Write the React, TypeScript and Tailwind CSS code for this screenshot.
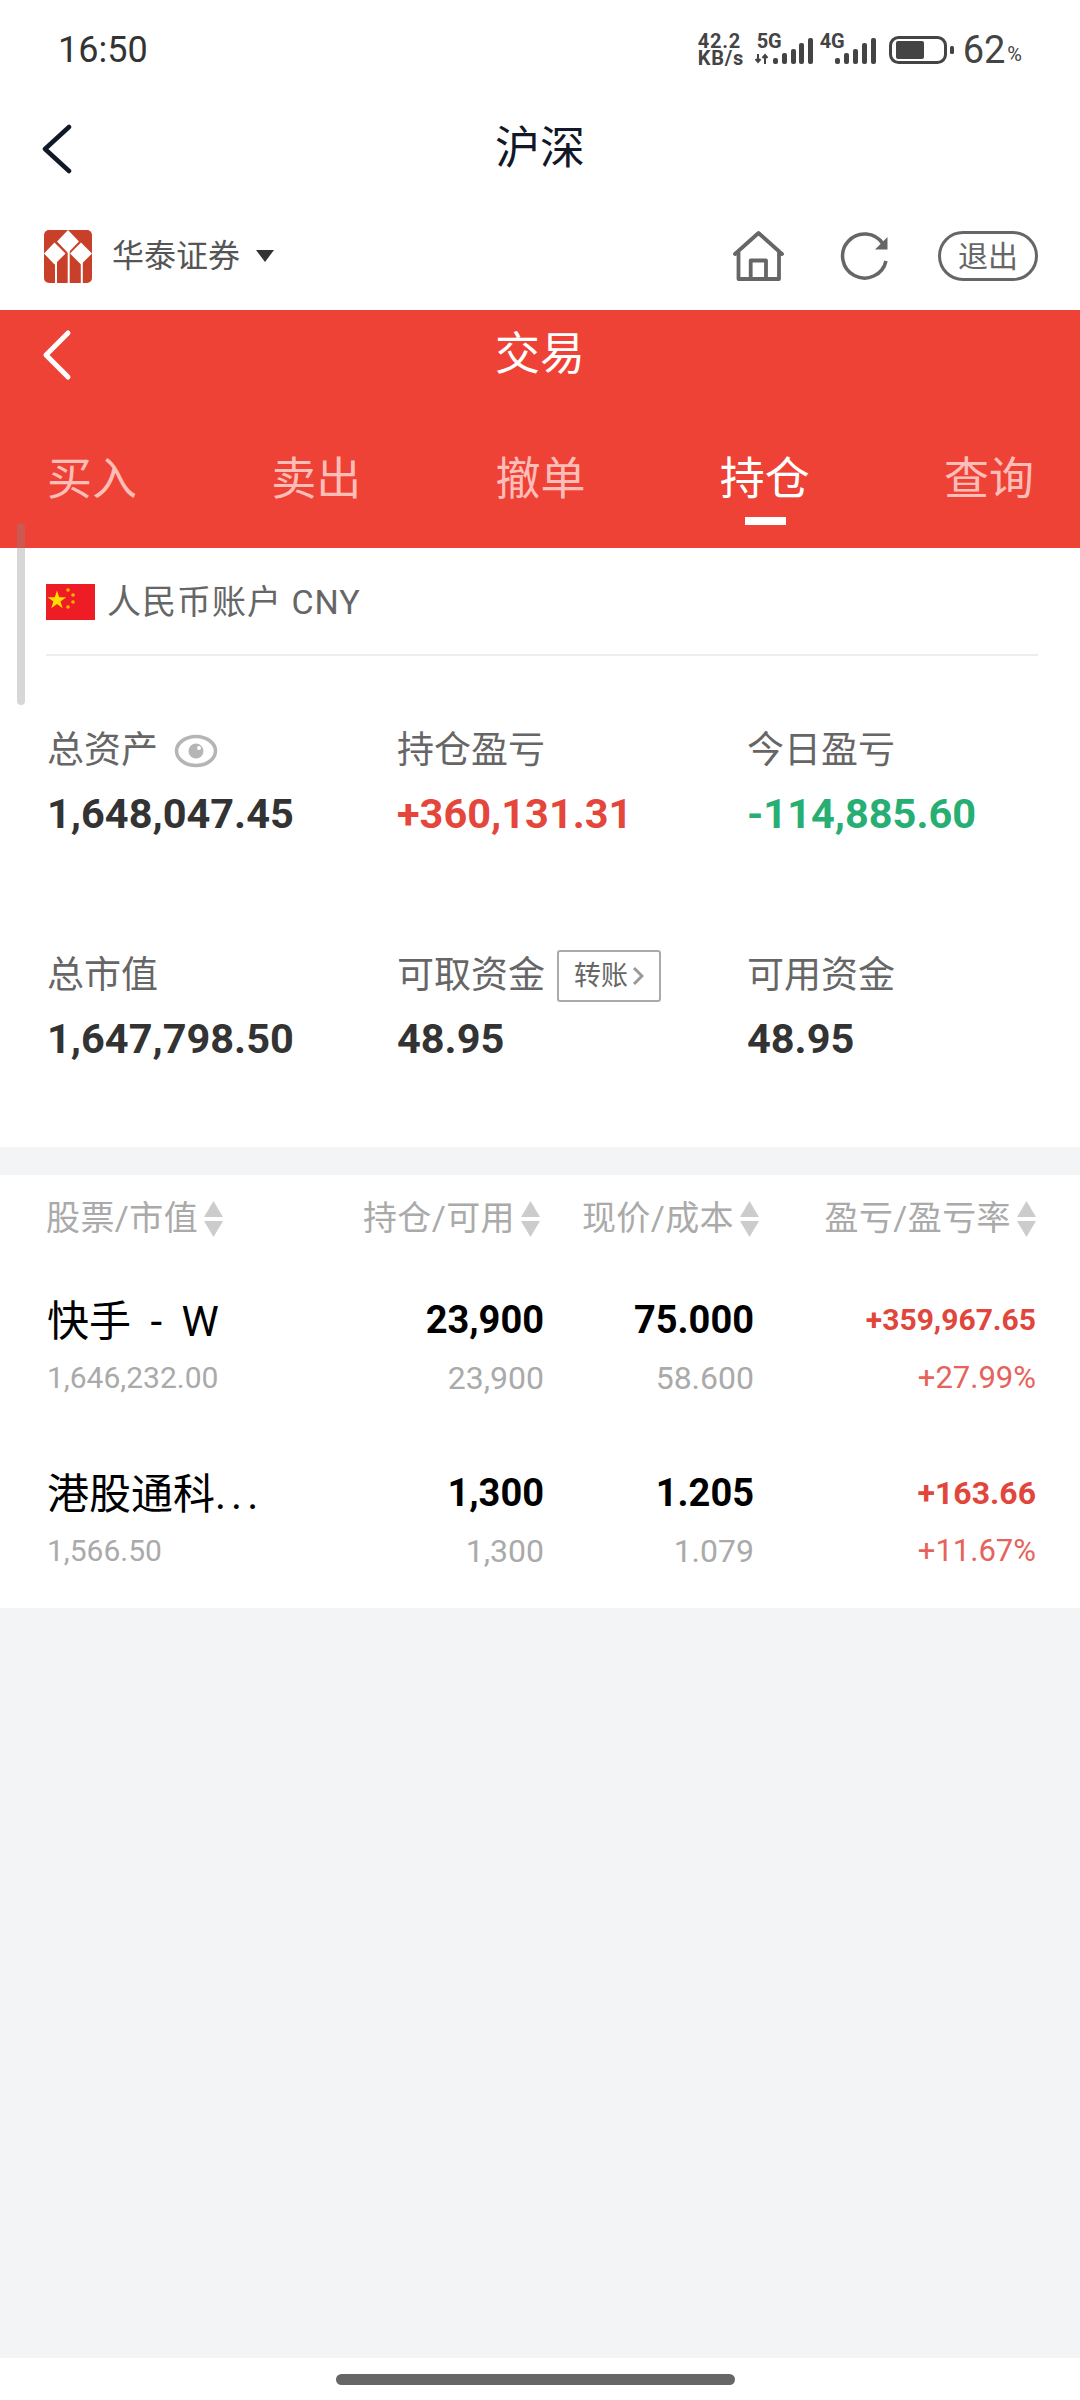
const stats = [
  { label: "总资产", value: "1,648,047.45", color: "text-[#333333]", eye: true },
  { label: "持仓盈亏", value: "+360,131.31", color: "text-[#e5463b]" },
  { label: "今日盈亏", value: "-114,885.60", color: "text-[#27ae73]" },
  { label: "总市值", value: "1,647,798.50", color: "text-[#333333]" },
  { label: "可取资金", value: "48.95", color: "text-[#333333]", transfer: true },
  { label: "可用资金", value: "48.95", color: "text-[#333333]" },
];

const rows = [
  {
    name: "快手 - W",
    dots: false,
    cap: "1,646,232.00",
    hold: "23,900",
    avail: "23,900",
    price: "75.000",
    cost: "58.600",
    pnl: "+359,967.65",
    pnlSize: "text-[30px]",
    rate: "+27.99%",
  },
  {
    name: "港股通科",
    dots: true,
    cap: "1,566.50",
    hold: "1,300",
    avail: "1,300",
    price: "1.205",
    cost: "1.079",
    pnl: "+163.66",
    pnlSize: "text-[32px]",
    rate: "+11.67%",
  },
];

function Bars({ xs }: { xs: number[] }) {
  const heights = [6, 11, 15, 21, 26];
  return (
    <>
      {xs.map((x, i) => (
        <rect key={x} x={x} y={28 - heights[i]} width={5} height={heights[i]} rx={2} fill="#444444" />
      ))}
    </>
  );
}

function StatusIcons() {
  return (
    <div className="flex items-center">
      <div className="w-[50px] text-[20px] leading-[17px] font-bold tracking-[0.8px] whitespace-nowrap text-[#444444]">
        42.2
        <br />
        KB/s
      </div>
      <div className="relative ml-[7px] h-[28px] w-[60px]">
        <svg width="60" height="28" viewBox="0 0 60 28">
          <path d="M3 18v8M0.5 23l2.500 3 2.500-3M10 28v-9M7.500 22l2.500-3 2.500 3" stroke="#444444" strokeWidth="2" fill="none" />
          <Bars xs={[18, 27, 36, 44, 53]} />
        </svg>
        <span className="absolute top-[-4px] left-[2px] text-[20px] leading-[18px] font-bold text-[#444444]">5G</span>
      </div>
      <div className="relative ml-[5px] h-[28px] w-[58px]">
        <svg width="58" height="28" viewBox="0 0 58 28">
          <Bars xs={[15, 24, 33, 42, 51]} />
        </svg>
        <span className="absolute top-[-4px] left-0 text-[20px] leading-[18px] font-bold text-[#444444]">4G</span>
      </div>
      <svg className="ml-[11px]" width="66" height="28" viewBox="0 0 66 28">
        <rect x="1.500" y="1.500" width="55" height="25" rx="8" fill="none" stroke="#444444" strokeWidth="3" />
        <rect x="7" y="5" width="28" height="18" rx="2" fill="#444444" />
        <rect x="61" y="10" width="4" height="8" rx="1.500" fill="#444444" />
      </svg>
      <span className="ml-[8px] text-[38px] leading-[36px] text-[#444444]">62</span>
      <span className="mt-[8px] ml-[2px] text-[20px] leading-[20px] text-[#444444]">%</span>
    </div>
  );
}

function Logo() {
  return (
    <svg width="48" height="53" viewBox="0 0 48 53">
      <rect width="48" height="53" rx="5" fill="#c9402a" />
      <path d="M24 0l11 11.500-11 11.500-11-11.500zM10.500 12.500l11 11-11 11L0 23.500zM37 12.500l11 11-11 11-11-11z" fill="#ffffff" />
      <path d="M12 32v21M24.700 20v33M37.800 32v21" stroke="#ffffff" strokeWidth="2" />
    </svg>
  );
}

function SortArrows() {
  return (
    <svg className="ml-[6px] shrink-0" width="19" height="36" viewBox="0 0 19 36">
      <path d="M9.500 0L19 16H0zM0 20h19L9.500 36z" fill="#cccccc" />
    </svg>
  );
}

function Eye() {
  return (
    <svg className="ml-[16px]" width="44" height="36" viewBox="0 0 44 36">
      <ellipse cx="22" cy="18" rx="19.500" ry="14.500" fill="none" stroke="#b5b5b5" strokeWidth="3.500" />
      <circle cx="22" cy="18" r="7.500" fill="#b5b5b5" />
      <circle cx="25" cy="15" r="2" fill="#ffffff" />
    </svg>
  );
}

export default function App() {
  return (
    <div className="flex min-h-[2400px] w-[1080px] flex-col bg-white font-[Roboto,'Noto_Sans_CJK_SC',sans-serif]">
      {/* status bar */}
      <div className="flex h-[100px] items-center justify-between pr-[58px] pl-[58px]">
        <span className="text-[36px] text-[#333333]">16:50</span>
        <StatusIcons />
      </div>

      {/* title */}
      <div className="relative flex h-[97px] items-center justify-center">
        <svg className="absolute left-[42px]" width="30" height="50" viewBox="0 0 30 50">
          <path d="M27 3L3 25l24 22" fill="none" stroke="#111827" strokeWidth="4.500" strokeLinecap="round" strokeLinejoin="round" />
        </svg>
        <span className="text-[45px] text-[#111827]">沪深</span>
      </div>

      {/* broker row */}
      <div className="flex h-[113px] items-center pt-[5px] pr-[42px] pl-[44px]">
        <Logo />
        <span className="ml-[20px] text-[32px] text-[#555555]">华泰证券</span>
        <svg className="ml-[16px]" width="18" height="12" viewBox="0 0 18 12">
          <path d="M0 0h18L9 12z" fill="#333333" />
        </svg>
        <svg className="ml-auto" width="52" height="50" viewBox="0 0 52 50">
          <path d="M2 23L25.500 2 49 23M5.500 20v28h40.500V20M17.700 48V29.500H33V48" fill="none" stroke="#666666" strokeWidth="3.800" strokeLinejoin="round" strokeLinecap="round" />
        </svg>
        <svg className="ml-[55px]" width="50" height="50" viewBox="0 0 50 50">
          <path d="M43 13A22 22 0 1 0 46 30" fill="none" stroke="#666666" strokeWidth="3.500" />
          <path d="M47.500 6v12.500H35z" fill="#666666" />
        </svg>
        <div className="ml-[48px] flex h-[50px] w-[100px] items-center justify-center rounded-full border-[3px] border-[#666666] text-[30px] text-[#666666]">
          退出
        </div>
      </div>

      {/* red header */}
      <div className="relative h-[238px] bg-[#ee4236]">
        <div className="relative flex h-[85px] items-center justify-center pt-[4px]">
          <svg className="absolute left-[40px]" width="32" height="52" viewBox="0 0 32 52">
            <path d="M28 4L6 26l22 22" fill="none" stroke="#ffffff" strokeWidth="5" strokeLinecap="round" strokeLinejoin="round" />
          </svg>
          <span className="text-[45px] text-white">交易</span>
        </div>
        <div className="mt-[35px] flex h-[118px] items-start justify-between pr-[46px] pl-[47px] text-[45px] leading-[100px] text-[#ffbdb7]">
          <span>买入</span>
          <span>卖出</span>
          <span>撤单</span>
          <span className="relative text-white">
            持仓
            <span className="absolute top-[87px] left-[25px] h-[8px] w-[41px] bg-white" />
          </span>
          <span>查询</span>
        </div>
      </div>

      {/* account */}
      <div className="relative">
        <div className="absolute top-[-25px] left-[17px] h-[182px] w-[8px] rounded-full bg-[#88888855]" />
        <div className="mr-[42px] ml-[46px] flex h-[108px] items-center border-b-2 border-[#eeeeee] pt-[2px]">
          <svg width="49" height="36" viewBox="0 0 49 36">
            <rect width="49" height="36" fill="#ee1c25" />
            <path d="M11 6.500l2.200 6.800h7.100l-5.800 4.200 2.200 6.800-5.700-4.200-5.800 4.200 2.200-6.800-5.800-4.200h7.200z" fill="#ffde00" />
            <circle cx="22" cy="6" r="1.800" fill="#ffb400" />
            <circle cx="27" cy="11" r="1.800" fill="#ffb400" />
            <circle cx="27" cy="18" r="1.800" fill="#ffb400" />
            <circle cx="22" cy="23" r="1.800" fill="#ffb400" />
          </svg>
          <span className="ml-[12px] text-[34px] tracking-[1px] text-[#666666]">人民币账户 CNY</span>
        </div>

        {/* summary */}
        <div className="grid grid-cols-[350px_350px_1fr] gap-y-[99px] pt-[65px] pb-[75px] pl-[47px]">
          {stats.map((s) => (
            <div key={s.label} className="h-[126px]">
              <div className="flex h-[60px] items-center text-[37px] text-[#666666]">
                {s.label}
                {s.eye && <Eye />}
                {s.transfer && (
                  <div className="ml-[12px] flex h-[52px] w-[104px] items-center justify-center rounded-[3px] border-2 border-[#aaaaaa] text-[27px] text-[#666666]">
                    转账
                    <svg className="ml-[4px]" width="12" height="20" viewBox="0 0 12 20">
                      <path d="M2 2l8 8-8 8" fill="none" stroke="#999999" strokeWidth="3" />
                    </svg>
                  </div>
                )}
              </div>
              <div className={`flex h-[66px] items-center text-[41.500px] font-bold ${s.color}`}>{s.value}</div>
            </div>
          ))}
        </div>
      </div>

      {/* holdings */}
      <div className="h-[28px] bg-[#f3f4f6]" />
      <div className="grid h-[87px] grid-cols-[300px_194px_219px_277px] items-center pl-[46px] text-[34px] tracking-[0.4px] text-[#aaaaaa]">
        <div className="flex items-center">
          股票/市值
          <SortArrows />
        </div>
        <div className="flex items-center justify-end">
          持仓/可用
          <SortArrows />
        </div>
        <div className="flex items-center justify-end">
          现价/成本
          <SortArrows />
        </div>
        <div className="flex items-center justify-end">
          盈亏/盈亏率
          <SortArrows />
        </div>
      </div>
      <div>
        {rows.map((r) => (
          <div key={r.name} className="grid h-[173px] grid-cols-[297px_200px_210px_282px] pt-[30px] pl-[47px]">
            <div>
              <div className="h-[56px] text-[42px] leading-[60px] [word-spacing:9px] text-black">
                {r.name}
                {r.dots && <span className="tracking-[5px]">...</span>}
              </div>
              <div className="h-[56px] text-[30px] leading-[60px] text-[#aaaaaa]">{r.cap}</div>
            </div>
            <div className="text-right">
              <div className="h-[56px] text-[38px] leading-[56px] font-bold text-black">{r.hold}</div>
              <div className="h-[56px] text-[32px] leading-[60px] text-[#aaaaaa]">{r.avail}</div>
            </div>
            <div className="text-right">
              <div className="h-[56px] text-[38px] leading-[56px] font-bold text-black">{r.price}</div>
              <div className="h-[56px] text-[32px] leading-[60px] text-[#aaaaaa]">{r.cost}</div>
            </div>
            <div className="text-right">
              <div className={`h-[56px] leading-[56px] font-bold text-[#e0463c] ${r.pnlSize}`}>{r.pnl}</div>
              <div className="h-[56px] text-[31px] leading-[60px] text-[#e5635a]">{r.rate}</div>
            </div>
          </div>
        ))}
      </div>

      <div className="flex-1 bg-[#f3f4f6]" />

      {/* gesture bar */}
      <div className="h-[42px] pt-[16px] pl-[336px]">
        <div className="h-[11px] w-[399px] rounded-full bg-[#666666]" />
      </div>
    </div>
  );
}
